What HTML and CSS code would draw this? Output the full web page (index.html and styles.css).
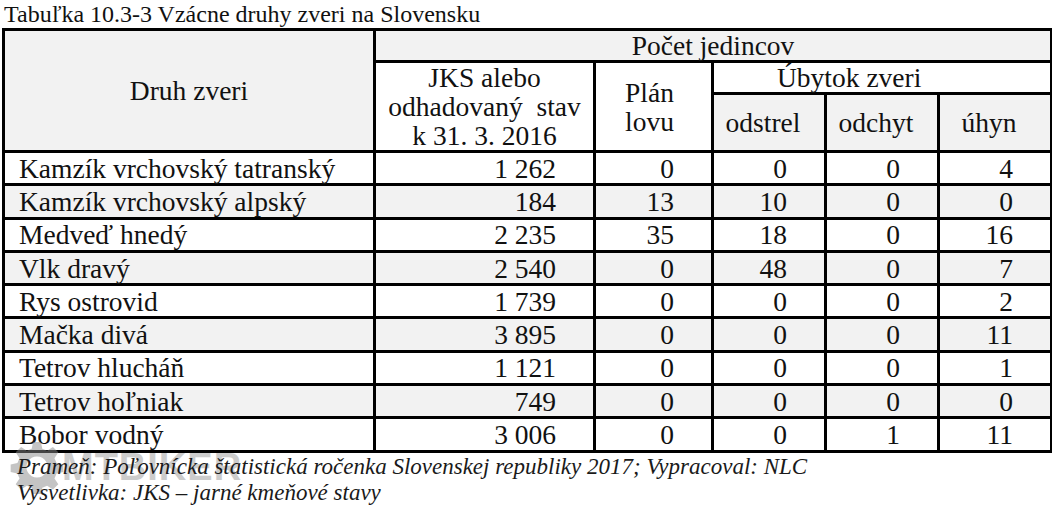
FILE: index.html
```html
<!DOCTYPE html>
<html lang="sk">
<head>
<meta charset="utf-8">
<title>Tabuľka 10.3-3</title>
<link rel="stylesheet" href="styles.css">
</head>
<body>
<div class="page">
  <div class="title">Tabuľka 10.3-3 Vzácne druhy zveri na Slovensku</div>
  <table class="t">
    <colgroup>
      <col class="c-druh"><col class="c-jks"><col class="c-plan"><col class="c-sub"><col class="c-sub"><col class="c-sub">
    </colgroup>
    <thead>
      <tr class="h1">
        <th rowspan="3" class="druh gray">Druh zveri</th>
        <th colspan="5" class="pocet gray">Počet jedincov</th>
      </tr>
      <tr class="h2">
        <th rowspan="2" class="jks">JKS alebo<br>odhadovaný&nbsp; stav<br>k 31. 3. 2016</th>
        <th rowspan="2" class="plan">Plán<br>lovu</th>
        <th colspan="3" class="ubytok">Úbytok zveri</th>
      </tr>
      <tr class="h3">
        <th class="sub gray">odstrel</th>
        <th class="sub gray">odchyt</th>
        <th class="sub gray">úhyn</th>
      </tr>
    </thead>
    <tbody>
      <tr><td class="name">Kamzík vrchovský tatranský</td><td class="num">1 262</td><td class="num">0</td><td class="num">0</td><td class="num">0</td><td class="num">4</td></tr>
      <tr class="alt"><td class="name">Kamzík vrchovský alpský</td><td class="num">184</td><td class="num">13</td><td class="num">10</td><td class="num">0</td><td class="num">0</td></tr>
      <tr><td class="name">Medveď hnedý</td><td class="num">2 235</td><td class="num">35</td><td class="num">18</td><td class="num">0</td><td class="num">16</td></tr>
      <tr class="alt"><td class="name">Vlk dravý</td><td class="num">2 540</td><td class="num">0</td><td class="num">48</td><td class="num">0</td><td class="num">7</td></tr>
      <tr><td class="name">Rys ostrovid</td><td class="num">1 739</td><td class="num">0</td><td class="num">0</td><td class="num">0</td><td class="num">2</td></tr>
      <tr class="alt"><td class="name">Mačka divá</td><td class="num">3 895</td><td class="num">0</td><td class="num">0</td><td class="num">0</td><td class="num">11</td></tr>
      <tr><td class="name">Tetrov hlucháň</td><td class="num">1 121</td><td class="num">0</td><td class="num">0</td><td class="num">0</td><td class="num">1</td></tr>
      <tr class="alt"><td class="name">Tetrov hoľniak</td><td class="num">749</td><td class="num">0</td><td class="num">0</td><td class="num">0</td><td class="num">0</td></tr>
      <tr><td class="name">Bobor vodný</td><td class="num">3 006</td><td class="num">0</td><td class="num">0</td><td class="num">1</td><td class="num">11</td></tr>
    </tbody>
  </table>
  <div class="notes">
    <p>Prameň: Poľovnícka štatistická ročenka Slovenskej republiky 2017; Vypracoval: NLC</p>
    <p>Vysvetlivka: JKS – jarné kmeňové stavy</p>
  </div>
  <div class="watermark" aria-hidden="true">
    <svg class="gear" width="54" height="54" viewBox="0 0 56 56">
      <path fill="#8a8a8a" fill-rule="evenodd" d="M24 2h8l1.5 7 5 2.2 6-4 5.6 5.6-4 6 2.2 5 7 1.5v8l-7 1.5-2.2 5 4 6-5.6 5.6-6-4-5 2.2-1.5 7h-8l-1.5-7-5-2.2-6 4-5.6-5.6 4-6-2.2-5-7-1.5v-8l7-1.5 2.2-5-4-6 5.6-5.6 6 4 5-2.2z M28 17a11 11 0 1 0 0.01 0z"/>
    </svg>
    <span class="wm-text">MTBIKER</span>
  </div>
</div>
</body>
</html>
```
FILE: styles.css
```css
html, body {
  margin: 0;
  padding: 0;
  background: #ffffff;
}

.page {
  position: relative;
  width: 1052px;
  height: 508px;
  font-family: "Liberation Serif", "Times New Roman", serif;
  color: #111;
}

.title {
  font-size: 24px;
  line-height: 28px;
  height: 28px;
  padding-left: 4px;
}

.t {
  border-collapse: collapse;
  table-layout: fixed;
  width: 1050px;
  margin-left: 2px;
  font-size: 27.5px;
}

.c-druh { width: 371px; }
.c-jks { width: 220px; }
.c-plan { width: 118px; }
.c-sub { width: 113px; }

.t th,
.t td {
  border: 3px solid #000;
  padding: 0;
  font-weight: normal;
  line-height: 29px;
  vertical-align: middle;
  white-space: nowrap;
}

.t .gray { background: #f2f2f2; }
.t .alt td { background: #f2f2f2; }

.h1 { height: 32px; }
.h2 { height: 31px; }
.h3 { height: 57px; }

.t .druh { text-align: center; }
.t .pocet { text-align: center; }
.t .jks { text-align: center; }
.t .plan { text-align: left; padding-left: 29px; }
.t .ubytok { text-align: left; padding-left: 63px; }
.t .sub { text-align: center; padding-right: 12px; }

.t tbody tr { height: 33.3px; }

.t .name {
  text-align: left;
  padding-left: 14px;
}

.t .num {
  text-align: right;
  padding-right: 37px;
}

.notes {
  position: relative;
  z-index: 2;
  padding-left: 17px;
  padding-top: 1px;
  font-style: italic;
  font-size: 23px;
  color: #1a1a1a;
}

.notes p {
  margin: 0;
  line-height: 26px;
}

.watermark {
  position: absolute;
  left: 10px;
  top: 440px;
  display: flex;
  align-items: center;
  opacity: 0.5;
  z-index: 1;
}

.wm-text {
  font-family: "Liberation Sans", Arial, sans-serif;
  font-weight: bold;
  font-size: 38px;
  color: #9a9a9a;
  margin-left: -2px;
  letter-spacing: 1px;
}
```
